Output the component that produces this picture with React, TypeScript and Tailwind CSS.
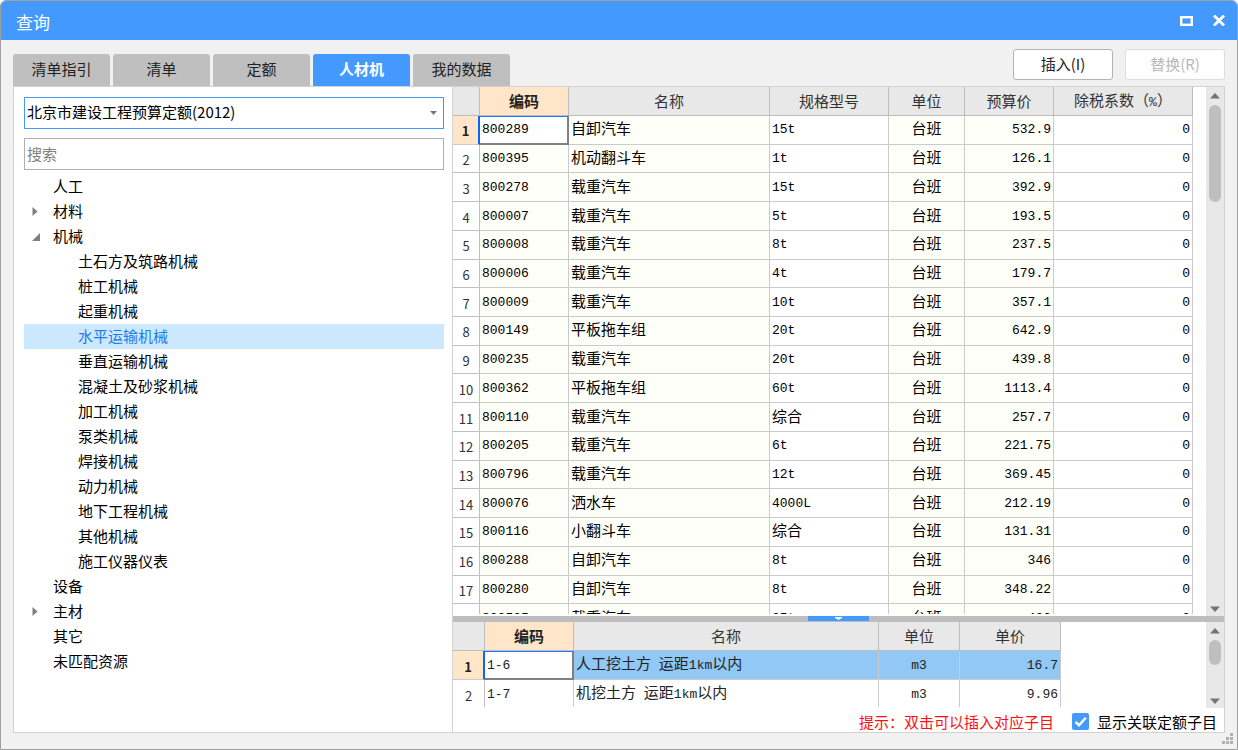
import React, { useState } from "react";

const tabs = ["清单指引", "清单", "定额", "人材机", "我的数据"];

type Node = { label: string; level: number; state?: "open" | "closed" };

const tree: Node[] = [
  { label: "人工", level: 0 },
  { label: "材料", level: 0, state: "closed" },
  { label: "机械", level: 0, state: "open" },
  { label: "土石方及筑路机械", level: 1 },
  { label: "桩工机械", level: 1 },
  { label: "起重机械", level: 1 },
  { label: "水平运输机械", level: 1 },
  { label: "垂直运输机械", level: 1 },
  { label: "混凝土及砂浆机械", level: 1 },
  { label: "加工机械", level: 1 },
  { label: "泵类机械", level: 1 },
  { label: "焊接机械", level: 1 },
  { label: "动力机械", level: 1 },
  { label: "地下工程机械", level: 1 },
  { label: "其他机械", level: 1 },
  { label: "施工仪器仪表", level: 1 },
  { label: "设备", level: 0 },
  { label: "主材", level: 0, state: "closed" },
  { label: "其它", level: 0 },
  { label: "未匹配资源", level: 0 },
];

const machines: [string, string, string, string][] = [
  ["800289", "自卸汽车", "15t", "532.9"],
  ["800395", "机动翻斗车", "1t", "126.1"],
  ["800278", "载重汽车", "15t", "392.9"],
  ["800007", "载重汽车", "5t", "193.5"],
  ["800008", "载重汽车", "8t", "237.5"],
  ["800006", "载重汽车", "4t", "179.7"],
  ["800009", "载重汽车", "10t", "357.1"],
  ["800149", "平板拖车组", "20t", "642.9"],
  ["800235", "载重汽车", "20t", "439.8"],
  ["800362", "平板拖车组", "60t", "1113.4"],
  ["800110", "载重汽车", "综合", "257.7"],
  ["800205", "载重汽车", "6t", "221.75"],
  ["800796", "载重汽车", "12t", "369.45"],
  ["800076", "洒水车", "4000L", "212.19"],
  ["800116", "小翻斗车", "综合", "131.31"],
  ["800288", "自卸汽车", "8t", "346"],
  ["800280", "自卸汽车", "8t", "348.22"],
  ["800525", "载重汽车", "25t", "400"],
];

const quotas: [string, string, string, string][] = [
  ["1-6", "人工挖土方 运距1km以内", "m3", "16.7"],
  ["1-7", "机挖土方 运距1km以内", "m3", "9.96"],
];

function Mixed({ text }: { text: string }) {
  return (
    <>
      {text.split(/([\x20-\x7e]+)/).map((part, i) =>
        i % 2 === 1 ? (
          <span key={i} className="whitespace-pre font-['Liberation_Mono','Noto_Sans_CJK_SC',monospace] text-[13px]">
            {part}
          </span>
        ) : (
          part
        ),
      )}
    </>
  );
}

const th = "h-[29px] border-b border-r border-[#bdbdbd] bg-[#e8e8e8] p-0 pb-0.5 font-normal text-[#333]";
const thActive = "h-[29px] border-b border-r border-[#bdbdbd] bg-[#ffe6c8] p-0 pb-0.5 font-bold text-[#222]";
const td = "h-7 border-b border-r border-[#cbcbcb] p-0 px-0.5 pb-1";
const num = "h-7 border-b border-r border-[#c0c0c0] p-0 pt-0.5 text-center text-[13px] font-normal text-[#333]";
const numActive =
  "h-7 border-b border-r-2 border-b-[#cbcbcb] border-r-[#0a64ff] bg-[#ffe6c8] p-0 pt-0.5 text-center text-[13px] font-bold text-[#222]";
const current =
  "h-7 border-b-2 border-r-2 border-t border-b-[#808080] border-r-[#808080] border-t-[#1f78ff] bg-white p-0 px-0.5 pb-1";

function ScrollBar({ thumb }: { thumb: string }) {
  return (
    <div className="flex w-[18px] shrink-0 flex-col items-center bg-[#e8e8e8] pt-[6px] pb-1">
      <svg width="10" height="6" viewBox="0 0 10 6" className="shrink-0">
        <path d="M5 0 10 5.5H0z" fill="#74747c" />
      </svg>
      <div className={thumb} />
      <svg width="10" height="6" viewBox="0 0 10 6" className="mt-auto shrink-0">
        <path d="M0 .5H10L5 6z" fill="#74747c" />
      </svg>
    </div>
  );
}

export default function App() {
  const [tab, setTab] = useState("人材机");
  const [selected, setSelected] = useState("水平运输机械");

  return (
    <div className="relative flex h-screen flex-col overflow-hidden rounded-t-md border border-[#a0a0a0] bg-[#f1f1f1] font-['Noto_Sans_CJK_SC',sans-serif] text-[15px] leading-none text-black">
      <header className="flex h-[39px] shrink-0 items-center justify-between bg-[#4499ff] pr-3 pl-[15px] text-white">
        <h1 className="pt-0.5 text-[17px]">查询</h1>
        <div className="flex items-center gap-5">
          <button type="button" aria-label="最大化" className="block">
            <svg width="13" height="10" viewBox="0 0 13 10" className="block">
              <rect x="1.2" y="1.2" width="10.6" height="7.6" fill="none" stroke="#fff" strokeWidth="2.4" />
            </svg>
          </button>
          <button type="button" aria-label="关闭" className="block">
            <svg width="12" height="11" viewBox="0 0 12 11" className="block">
              <path d="M1 .5 11 10.5M11 .5 1 10.5" stroke="#fff" strokeWidth="2.8" />
            </svg>
          </button>
        </div>
      </header>

      <div className="flex h-[46px] shrink-0 items-end justify-between px-3">
        <div role="tablist" className="flex gap-[3px]">
          {tabs.map((t) => (
            <button
              key={t}
              type="button"
              role="tab"
              aria-selected={t === tab}
              onClick={() => setTab(t)}
              className={
                t === tab
                  ? "h-8 w-[97px] rounded-t-[3px] bg-[#4499ff] pb-1 font-bold text-white"
                  : "h-8 w-[97px] rounded-t-[3px] bg-[#bfbfbf] pb-1 text-[#222]"
              }
            >
              {t}
            </button>
          ))}
        </div>
        <div className="flex gap-3 pb-[6px]">
          <button type="button" className="h-[31px] w-[100px] rounded-[3px] border border-[#b4b4b4] bg-white pb-0.5 text-[#222]">
            插入(I)
          </button>
          <button type="button" disabled className="h-[31px] w-[100px] rounded-[3px] border border-[#dcdcdc] bg-white pb-0.5 text-[#b8b8b8]">
            替换(R)
          </button>
        </div>
      </div>

      <main className="mx-3 mb-4 flex min-h-0 flex-1 border border-[#d2d2d2] bg-white">
        <aside className="flex w-[439px] shrink-0 flex-col border-r border-[#d2d2d2] pt-[10px] pr-2 pl-[10px]">
          <div className="relative">
            <select
              aria-label="定额库"
              className="block h-8 w-full appearance-none rounded-none border border-[#4499ff] bg-white pr-6 pb-0.5 pl-0.5 leading-6 outline-none"
            >
              <option>北京市建设工程预算定额(2012)</option>
            </select>
            <svg width="7" height="4" viewBox="0 0 7 4" className="pointer-events-none absolute top-[14px] right-[7px]">
              <path d="M0 0H7L3.5 4z" fill="#777" />
            </svg>
          </div>
          <input
            type="text"
            aria-label="搜索"
            placeholder="搜索"
            className="mt-[9px] block h-8 w-full border border-[#b0b0b0] pb-0.5 pl-0.5 outline-none placeholder:text-[#808080]"
          />
          <ul role="tree" className="mt-1">
            {tree.map((n) => (
              <li key={n.label} role="treeitem" aria-selected={n.label === selected}>
                <button
                  type="button"
                  onClick={() => setSelected(n.label)}
                  className={
                    n.label === selected
                      ? "flex h-[25px] w-full items-center bg-[#cce8ff] pb-0.5 text-[#1e7bea]"
                      : "flex h-[25px] w-full items-center pb-0.5 text-black"
                  }
                >
                  <span className={n.level === 1 ? "flex w-[54px] shrink-0 pt-0.5 pl-2" : "flex w-[29px] shrink-0 pt-0.5 pl-2"}>
                    {n.state === "closed" && (
                      <svg width="8" height="9" viewBox="0 0 8 9">
                        <path d="M0.5 0 5.5 4.5 0.5 9z" fill="#808080" />
                      </svg>
                    )}
                    {n.state === "open" && (
                      <svg width="8" height="9" viewBox="0 0 8 9">
                        <path d="M8 1V9H0z" fill="#808080" />
                      </svg>
                    )}
                  </span>
                  {n.label}
                </button>
              </li>
            ))}
          </ul>
        </aside>

        <section className="flex min-w-0 flex-1 flex-col">
          <div className="flex min-h-0 flex-1">
            <div className="mb-0.5 min-w-0 flex-1 overflow-hidden pr-[13px]">
              <table className="h-[546px] w-full table-fixed border-separate border-spacing-0">
                <colgroup>
                  <col className="w-[27px]" />
                  <col className="w-[89px]" />
                  <col />
                  <col className="w-[119px]" />
                  <col className="w-[76px]" />
                  <col className="w-[89px]" />
                  <col className="w-[139px]" />
                </colgroup>
                <thead>
                  <tr>
                    <th className={th} />
                    <th className={thActive}>编码</th>
                    <th className={th}>名称</th>
                    <th className={th}>规格型号</th>
                    <th className={th}>单位</th>
                    <th className={th}>预算价</th>
                    <th className={th}>
                      除税系数（<Mixed text="%" />）
                    </th>
                  </tr>
                </thead>
                <tbody>
                  {machines.map(([code, name, spec, price], i) => (
                    <tr key={code}>
                      <th scope="row" className={i === 0 ? numActive : num}>
                        {i + 1}
                      </th>
                      <td className={i === 0 ? current : td + " bg-[#fffffa]"}>
                        <Mixed text={code} />
                      </td>
                      <td className={td + " bg-[#fffffa]"}>{name}</td>
                      <td className={td}>
                        <Mixed text={spec} />
                      </td>
                      <td className={td + " bg-[#fffffa] text-center"}>台班</td>
                      <td className={td + " bg-[#fffffa] text-right"}>
                        <Mixed text={price} />
                      </td>
                      <td className={td + " text-right"}>
                        <Mixed text="0" />
                      </td>
                    </tr>
                  ))}
                </tbody>
              </table>
            </div>
            <ScrollBar thumb="mt-[6px] h-[97px] w-3 rounded-full bg-[#bfbfbf]" />
          </div>

          <div className="flex h-[6px] shrink-0 justify-center bg-[#bdbdbd]">
            <button type="button" aria-label="折叠" className="flex h-[5px] w-[61px] items-start justify-center bg-[#4499ff] pt-px">
              <svg width="7" height="3" viewBox="0 0 7 3">
                <path d="M0 0H7V1L3.5 3 0 1z" fill="#fff" />
              </svg>
            </button>
          </div>

          <div className="flex h-[86px] shrink-0">
            <div className="mb-px min-w-0 flex-1 overflow-hidden pr-[145px]">
              <table className="h-[87px] w-full table-fixed border-separate border-spacing-0">
                <colgroup>
                  <col className="w-[32px]" />
                  <col className="w-[89px]" />
                  <col />
                  <col className="w-[81px]" />
                  <col className="w-[101px]" />
                </colgroup>
                <thead>
                  <tr>
                    <th className={th} />
                    <th className={thActive}>编码</th>
                    <th className={th}>名称</th>
                    <th className={th}>单位</th>
                    <th className={th}>单价</th>
                  </tr>
                </thead>
                <tbody className="text-[#222]">
                  {quotas.map(([code, name, unit, price], i) => (
                    <tr key={code} className={i === 0 ? "bg-[#91c8f6]" : "bg-white"}>
                      <th scope="row" className={i === 0 ? numActive : num}>
                        {i + 1}
                      </th>
                      <td className={i === 0 ? current : td}>
                        <Mixed text={code} />
                      </td>
                      <td className={td}>
                        <Mixed text={name} />
                      </td>
                      <td className={td + " text-center"}>
                        <Mixed text={unit} />
                      </td>
                      <td className={td + " text-right"}>
                        <Mixed text={price} />
                      </td>
                    </tr>
                  ))}
                </tbody>
              </table>
            </div>
            <ScrollBar thumb="mt-[6px] h-[25px] w-3 rounded-full bg-[#bfbfbf]" />
          </div>

          <div className="flex h-6 shrink-0 items-center justify-end gap-[18px] pt-0.5 pr-[7px]">
            <p className="text-[#ff1010]">提示：双击可以插入对应子目</p>
            <label className="flex items-center gap-2">
              <span className="relative block">
                <input type="checkbox" defaultChecked className="block size-[17px] appearance-none rounded-[2px] bg-[#4499ff]" />
                <svg width="17" height="17" viewBox="0 0 17 17" className="pointer-events-none absolute inset-0">
                  <path d="M3.5 8.8 7 12.2 13.8 4.8" fill="none" stroke="#fff" strokeWidth="2.4" />
                </svg>
              </span>
              显示关联定额子目
            </label>
          </div>
        </section>
      </main>

      <svg width="11" height="11" viewBox="0 0 11 11" className="absolute right-1 bottom-[5px]">
        <path d="M8 0h3v3H8zM8 4h3v3H8zM4 4h3v3H4zM8 8h3v3H8zM4 8h3v3H4zM0 8h3v3H0z" fill="#b0b0b0" />
      </svg>
    </div>
  );
}
